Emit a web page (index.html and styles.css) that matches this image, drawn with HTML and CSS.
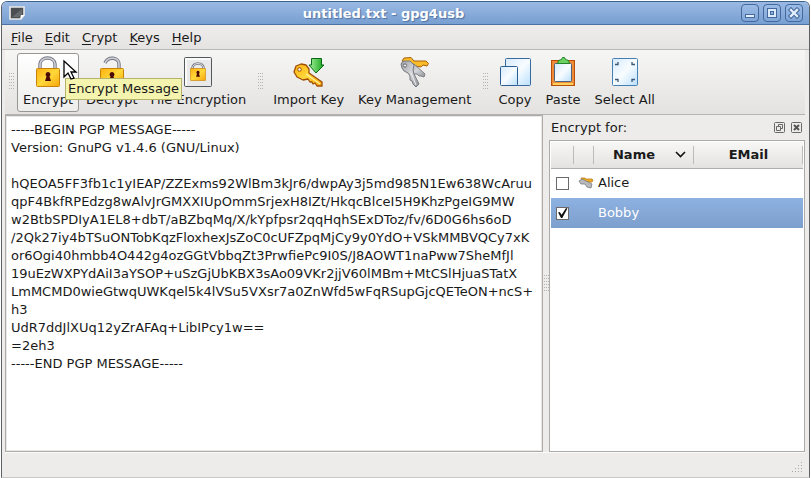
FILE: index.html
```
<!DOCTYPE html>
<html lang="en">
<head>
    <meta charset="UTF-8">
    <meta name="viewport" content="width=device-width, initial-scale=1.0">
    <title>untitled.txt - gpg4usb</title>
    <link rel="stylesheet" href="styles.css">
</head>
<body>
    <!-- shared icon shapes and gradients -->
    <svg class="defs" width="0" height="0" aria-hidden="true">
        <defs>
            <linearGradient id="gold" x1="0" y1="0" x2="1" y2="1">
                <stop offset="0" stop-color="#ffb011"/>
                <stop offset="0.5" stop-color="#ffd83a"/>
                <stop offset="1" stop-color="#f6a50a"/>
            </linearGradient>
            <linearGradient id="steel" x1="0" y1="0" x2="1" y2="1">
                <stop offset="0" stop-color="#9b9da4"/>
                <stop offset="0.5" stop-color="#d5d6da"/>
                <stop offset="1" stop-color="#8f9096"/>
            </linearGradient>
            <linearGradient id="paper" x1="0" y1="0" x2="1" y2="1">
                <stop offset="0" stop-color="#d5eafd"/>
                <stop offset="0.5" stop-color="#f8fcff"/>
                <stop offset="1" stop-color="#b9dffc"/>
            </linearGradient>
            <linearGradient id="green" x1="0" y1="0" x2="1" y2="0">
                <stop offset="0" stop-color="#a5f09b"/>
                <stop offset="1" stop-color="#15a51b"/>
            </linearGradient>
            <symbol id="lock-body" viewBox="0 0 24 19">
                <rect x="0.5" y="0.5" width="23" height="18" rx="1" fill="url(#gold)" stroke="#c88207"/>
                <path d="M12 4a2.600 2.600 0 0 1 1.500 4.600l1.500 4.400H9l1.500-4.400A2.600 2.600 0 0 1 12 4z" fill="#4b0904"/>
            </symbol>
        </defs>
    </svg>

    <div class="window">
        <header class="titlebar">
            <svg class="app-icon" width="17" height="14" viewBox="0 0 17 14">
                <path d="M1 1h14v8l-3 4H1z" fill="#4b4e50" stroke="#e9eae8" stroke-width="1.6"/>
                <path d="M3 11L13 3v6l-3 2z" fill="#666a6c"/>
                <path d="M11 13l1-4h4z" fill="#fff"/>
            </svg>
            <h1>untitled.txt - gpg4usb</h1>
            <div class="window-buttons">
                <button type="button" aria-label="Minimize">
                    <svg width="16" height="16" viewBox="0 0 16 16"><rect x="3.5" y="9.5" width="9" height="3" fill="#e4effc" stroke="#43699d"/></svg>
                </button>
                <button type="button" aria-label="Maximize">
                    <svg width="16" height="16" viewBox="0 0 16 16"><rect x="5" y="5" width="6" height="6" fill="none" stroke="#43699d" stroke-width="4"/><rect x="5" y="5" width="6" height="6" fill="none" stroke="#dceafb" stroke-width="2"/></svg>
                </button>
                <button type="button" aria-label="Close">
                    <svg width="16" height="16" viewBox="0 0 16 16"><path d="M5 5l6 6m0-6l-6 6" stroke="#43699d" stroke-width="4.500" stroke-linecap="square"/><path d="M5 5l6 6m0-6l-6 6" stroke="#e4effc" stroke-width="2.400" stroke-linecap="square"/></svg>
                </button>
            </div>
        </header>

        <nav class="menubar">
            <a href="#file"><u>F</u>ile</a>
            <a href="#edit"><u>E</u>dit</a>
            <a href="#crypt"><u>C</u>rypt</a>
            <a href="#keys-menu"><u>K</u>eys</a>
            <a href="#help"><u>H</u>elp</a>
        </nav>

        <div class="toolbar">
            <span class="grip"></span>
            <div class="tool-wrap">
                <button type="button" class="tool active">
                    <svg width="32" height="32" viewBox="0 0 32 32">
                        <path d="M8 13V8a7.500 6 0 0 1 15 0v5" fill="none" stroke="#777984" stroke-width="3.400"/>
                        <path d="M8 13V8a7.500 6 0 0 1 15 0v5" fill="none" stroke="#cdced8" stroke-width="1.600"/>
                        <use href="#lock-body" x="4" y="12" width="24" height="19"/>
                    </svg>
                    <span>Encrypt</span>
                </button>
                <svg class="cursor" width="14" height="21" viewBox="0 0 14 21">
                    <path d="M1 1v16l4-4 3 6 3-1-3-6h5z" fill="#fff" stroke="#000" stroke-width="1.300"/>
                </svg>
                <div class="tooltip" role="tooltip">Encrypt Message</div>
            </div>
            <button type="button" class="tool">
                <svg width="32" height="32" viewBox="0 0 32 32">
                    <path d="M9 7C12 0 23 1 23 8v5" fill="none" stroke="#777984" stroke-width="3.400"/>
                    <path d="M9 7C12 0 23 1 23 8v5" fill="none" stroke="#cdced8" stroke-width="1.600"/>
                    <use href="#lock-body" x="4" y="12" width="24" height="19"/>
                </svg>
                <span>Decrypt</span>
            </button>
            <button type="button" class="tool">
                <svg width="32" height="32" viewBox="0 0 32 32">
                    <rect x="2.500" y="1.500" width="27" height="29" rx="1" fill="#e9e9e9" stroke="#53585a"/>
                    <path d="M4 29V3h24" fill="none" stroke="#fff" stroke-width="1.500"/>
                    <path d="M10.500 14v-2a5.500 4.500 0 0 1 11 0v2" fill="none" stroke="#777984" stroke-width="2.600"/>
                    <path d="M10.500 14v-2a5.500 4.500 0 0 1 11 0v2" fill="none" stroke="#d9dae0"/>
                    <use href="#lock-body" x="8" y="12" width="16" height="13"/>
                </svg>
                <span>File Encryption</span>
            </button>
            <span class="grip"></span>
            <button type="button" class="tool">
                <svg width="32" height="32" viewBox="0 0 32 32">
                    <path d="M1 16L3 10L8 8L13 9L16 13V17L29 26V30H24L22 27L20 28L19 26L17 26L15 23L10 24L4 21Z" fill="url(#gold)" stroke="#a04e06" stroke-width="1.300" stroke-linejoin="round"/>
                    <path d="M13 18l14 10" stroke="#fff0a0" stroke-width="1.200"/>
                    <circle cx="6.500" cy="13.500" r="1.800" fill="#f2eee6" stroke="#a04e06"/>
                    <path d="M18.500 2.500h10V9H31l-8 8-7-8h2.500z" fill="url(#green)" stroke="#0b6816"/>
                </svg>
                <span>Import Key</span>
            </button>
            <button type="button" class="tool">
                <svg width="32" height="32" viewBox="0 0 32 32">
                    <path d="M3 5L5 2L12 1.500L15 5H27L29.500 7.500L28 10L24 9L22 11L16 10Z" fill="#fbbd27" stroke="#a85f08" stroke-linejoin="round"/>
                    <path d="M9 8L15 8L26 18L25 21L22 20L20 20L18 18L15 18L12 15Z" fill="url(#steel)" stroke="#808188" stroke-linejoin="round"/>
                    <path d="M2 8L4 5L11 5L15 9L14 14L15 18L20 28L17 31L14 28L13 25L11 24L11 20L9 17L5 15L3 12Z" fill="url(#steel)" stroke="#77787e" stroke-linejoin="round"/>
                    <path d="M12 17l5 12" stroke="#eeeef2"/>
                    <circle cx="6" cy="9.500" r="1.600" fill="#f4f4f4" stroke="#66676c"/>
                </svg>
                <span>Key Management</span>
            </button>
            <span class="grip"></span>
            <button type="button" class="tool">
                <svg width="32" height="32" viewBox="0 0 32 32">
                    <rect x="6.500" y="2.500" width="25" height="27" rx="1" fill="url(#paper)" stroke="#396b9e"/>
                    <rect x="1.500" y="10.500" width="17" height="19" rx="1" fill="url(#paper)" stroke="#2d5e91"/>
                </svg>
                <span>Copy</span>
            </button>
            <button type="button" class="tool">
                <svg width="32" height="32" viewBox="0 0 32 32">
                    <rect x="4.500" y="4.500" width="23" height="25" fill="#ef8b36" stroke="#b84e09"/>
                    <path d="M6 28h20" stroke="#ffd15a" stroke-width="2"/>
                    <rect x="7.500" y="7.500" width="17" height="18" rx="1" fill="url(#paper)" stroke="#4d647f"/>
                    <path d="M10.500 7.500l1-3 3-1 1-2h2l1 2 3 1 1 3z" fill="#6bd163" stroke="#218327"/>
                </svg>
                <span>Paste</span>
            </button>
            <button type="button" class="tool">
                <svg width="32" height="32" viewBox="0 0 32 32">
                    <rect x="3.500" y="2.500" width="25" height="27" rx="1" fill="url(#paper)" stroke="#4580b5"/>
                    <path d="M6 8.500h3V6M26 8.500h-3V6M6 23.500h3V26M26 23.500h-3V26" fill="none" stroke="#3a5877" stroke-width="1.300"/>
                </svg>
                <span>Select All</span>
            </button>
        </div>

        <main class="content">
            <textarea class="editor" aria-label="Message" spellcheck="false" wrap="off">
-----BEGIN PGP MESSAGE-----
Version: GnuPG v1.4.6 (GNU/Linux)

hQEOA5FF3fb1c1yIEAP/ZZExms92WlBm3kJr6/dwpAy3j5md985N1Ew638WcAruu
qpF4BkfRPEdzg8wAlvJrGMXXIUpOmmSrjexH8IZt/HkqcBlceI5H9KhzPgeIG9MW
w2BtbSPDIyA1EL8+dbT/aBZbqMq/X/kYpfpsr2qqHqhSExDToz/fv/6D0G6hs6oD
/2Qk27iy4bTSuONTobKqzFloxhexJsZoC0cUFZpqMjCy9y0YdO+VSkMMBVQCy7xK
or6Ogi40hmbb4O442g4ozGGtVbbqZt3PrwfiePc9I0S/J8AOWT1naPww7SheMfJl
19uEzWXPYdAiI3aYSOP+uSzGjUbKBX3sAo09VKr2jjV60lMBm+MtCSlHjuaSTatX
LmMCMD0wieGtwqUWKqel5k4lVSu5VXsr7a0ZnWfd5wFqRSupGjcQETeON+ncS+
h3
UdR7ddJlXUq12yZrAFAq+LibIPcy1w==
=2eh3
-----END PGP MESSAGE-----</textarea>
            <div class="splitter"><span class="grip"></span></div>
            <aside class="dock">
                <div class="dock-title">
                    <h2>Encrypt for:</h2>
                    <button type="button" aria-label="Float panel">
                        <svg width="11" height="11" viewBox="0 0 11 11"><rect x="0.500" y="0.500" width="10" height="10" rx="1" fill="none" stroke="#686868"/><path d="M4.500 4V2.500h4v4H7M2.500 4.500h4v4h-4z" fill="none" stroke="#686868"/></svg>
                    </button>
                    <button type="button" aria-label="Close panel">
                        <svg width="11" height="11" viewBox="0 0 11 11"><rect x="0.500" y="0.500" width="10" height="10" rx="1" fill="none" stroke="#686868"/><path d="M3 3l5 5m0-5l-5 5" stroke="#555" stroke-width="2"/></svg>
                    </button>
                </div>
                <div class="key-list">
                    <table>
                        <colgroup>
                            <col class="col-check">
                            <col class="col-type">
                            <col class="col-name">
                            <col>
                        </colgroup>
                        <thead>
                            <tr>
                                <th></th>
                                <th></th>
                                <th>
                                    <div class="sorted">
                                        <span>Name</span>
                                        <svg width="11" height="7" viewBox="0 0 11 7"><path d="M1 1l4.500 4.500L10 1" fill="none" stroke="#111" stroke-width="1.600"/></svg>
                                    </div>
                                </th>
                                <th>EMail</th>
                            </tr>
                        </thead>
                        <tbody>
                            <tr>
                                <td><input type="checkbox" id="key-alice"></td>
                                <td><svg width="16" height="12" viewBox="0 0 16 12">
                                    <path d="M3 1h4l1 1h6l1 1-1 2H8L5 5z" fill="#f0ac26" stroke="#b97c18" stroke-width="0.800"/>
                                    <path d="M1 4l3-2 4 2 6 3-1 4-4-1-2-3H3z" fill="#b9babd" stroke="#77787c" stroke-width="0.800"/>
                                </svg></td>
                                <td><label for="key-alice">Alice</label></td>
                                <td></td>
                            </tr>
                            <tr class="selected">
                                <td><input type="checkbox" id="key-bobby" checked></td>
                                <td></td>
                                <td><label for="key-bobby">Bobby</label></td>
                                <td></td>
                            </tr>
                        </tbody>
                    </table>
                </div>
            </aside>
        </main>

        <footer class="statusbar">
            <svg width="11" height="11" viewBox="0 0 11 11" fill="#a9a8a6">
                <path d="M9 0h1v1H9zM6 3h1v1H6zM9 3h1v1H9zM3 6h1v1H3zM6 6h1v1H6zM9 6h1v1H9zM0 9h1v1H0zM3 9h1v1H3zM6 9h1v1H6zM9 9h1v1H9z"/>
            </svg>
        </footer>
    </div>
</body>
</html>
```

FILE: styles.css
```
* {
    box-sizing: border-box;
}
body {
    margin: 0;
    padding: 1px 1px 0;
    background: #fff;
    color: #1a1a1a;
    font: 13px/18px "DejaVu Sans", sans-serif;
}
button {
    font: inherit;
    color: inherit;
    background: none;
    border: 0;
    padding: 0;
}
svg {
    display: block;
    overflow: visible;
}
.defs {
    position: absolute;
}

/* window frame */
.window {
    display: flex;
    flex-direction: column;
    height: calc(100vh - 1px);
    background: #edecea;
    border: 1px solid #5c6265;
    border-top-color: #3c6488;
    border-bottom-color: #c9c8c6;
    border-radius: 6px 6px 0 0;
    overflow: hidden;
}
.titlebar {
    display: flex;
    align-items: center;
    height: 23px;
    flex: none;
    padding: 0 6px 0 7px;
    background: linear-gradient(#9ab9e3, #779fd1);
    border-bottom: 1px solid #4d71a2;
}
.titlebar h1 {
    flex: 1;
    margin: 0;
    padding-top: 1px;
    font-size: 13px;
    text-align: center;
    color: #fff;
    text-shadow: 1px 1px 1px #4d71a2;
}
.window-buttons {
    display: flex;
    gap: 4px;
}
.window-buttons button {
    width: 18px;
    height: 18px;
    border: 1px solid #43699d;
    border-radius: 4px;
    background: linear-gradient(#9dbce6, #7fa5d6);
}

/* menu */
.menubar {
    display: flex;
    gap: 12px;
    flex: none;
    height: 25px;
    padding: 4px 9px 0;
    background: linear-gradient(#efeeed, #e4e3e1);
    border-bottom: 1px solid #b9b8b6;
}
.menubar a {
    color: inherit;
    text-decoration: none;
}
.menubar u {
    text-underline-offset: 2px;
}

/* toolbar */
.toolbar {
    display: flex;
    gap: 1px;
    flex: none;
    height: 65px;
    margin: 0 4px 0 3px;
    padding: 3px 0 2px;
    background: linear-gradient(#f6f6f4, #e3e2e0);
    border-bottom: 1px solid #b5b4b2;
}
.grip {
    flex: none;
    width: 5px;
    height: 17px;
    background: conic-gradient(from 270deg at 1px 1px, #b5b4b2 90deg, transparent 0) 0 0 / 2px 3px;
}
.toolbar .grip {
    margin: 20px 3px 0 5px;
}
.toolbar .grip:first-child {
    margin: 20px 2px 0 4px;
}
.tool-wrap {
    position: relative;
}
.tool {
    display: flex;
    flex-direction: column;
    align-items: center;
    gap: 3px;
    height: 59px;
    padding: 2px 5px 0;
    border: 1px solid transparent;
    border-radius: 3px;
    white-space: nowrap;
}
.tool + .tool {
    margin-left: 1px;
}
.tool-wrap + .tool + .tool {
    margin-left: 0;
}
.tool.active {
    background: linear-gradient(#fff, #ededec);
    border-color: #979694;
}
.cursor {
    position: absolute;
    left: 46px;
    top: 7px;
    z-index: 2;
}
.tooltip {
    position: absolute;
    left: 48px;
    top: 25px;
    z-index: 1;
    padding: 1px 2px;
    background: #f4f4ae;
    border: 1px solid #b3b36c;
    white-space: nowrap;
}

/* editor and key list */
.content {
    display: flex;
    flex: 1;
    min-height: 0;
    margin: 0 4px 0 3px;
}
.editor {
    flex: 1;
    min-width: 0;
    margin: 0;
    padding: 5px;
    border: 1px solid #acabaa;
    box-shadow: inset 0 0 0 1px #e9e8e7;
    background: #fff;
    color: #1a1a1a;
    font: inherit;
    resize: none;
    outline: 0;
    overflow: hidden;
}
.splitter {
    display: flex;
    align-items: center;
    justify-content: center;
    width: 6px;
}
.dock {
    display: flex;
    flex-direction: column;
    width: 256px;
}
.dock-title {
    display: flex;
    align-items: center;
    gap: 6px;
    height: 25px;
    padding: 0 3px 0 2px;
}
.dock-title h2 {
    flex: 1;
    margin: 0;
    font-size: 13px;
    font-weight: normal;
}
.key-list {
    flex: 1;
    padding: 1px;
    background: #fff;
    border: 1px solid #acabaa;
}
table {
    width: 100%;
    table-layout: fixed;
    border-collapse: collapse;
}
.col-check {
    width: 23px;
}
.col-type {
    width: 20px;
}
.col-name {
    width: 100px;
}
th {
    height: 26px;
    padding: 0;
    background: linear-gradient(transparent 4px, #bcbbb9 4px, #bcbbb9 22px, transparent 22px) right / 1px 100% no-repeat,
        linear-gradient(#f7f7f6, #e3e2e0);
    border-bottom: 1px solid #b0afad;
}
.sorted {
    display: flex;
    align-items: center;
    justify-content: flex-end;
    gap: 20px;
    padding-right: 8px;
}
td {
    height: 30px;
    padding: 0 0 0 4px;
}
.selected {
    color: #fff;
    background: linear-gradient(#8db1e1, #7d9fce);
}
input[type="checkbox"] {
    appearance: none;
    display: block;
    width: 13px;
    height: 13px;
    margin: 0 0 0 1px;
    background: #fff;
    border: 1px solid #6a6a6a;
}
input[type="checkbox"]:checked::after {
    content: "";
    display: block;
    width: 11px;
    height: 11px;
    background: #111;
    clip-path: polygon(10% 45%, 25% 40%, 42% 65%, 82% 5%, 95% 10%, 48% 95%, 36% 95%);
}

/* status bar */
.statusbar {
    display: flex;
    align-items: flex-end;
    justify-content: flex-end;
    flex: none;
    height: 25px;
    margin: 0 4px 0 3px;
    padding: 0 2px 4px;
    border-top: 1px solid #fbfbfa;
}
```
